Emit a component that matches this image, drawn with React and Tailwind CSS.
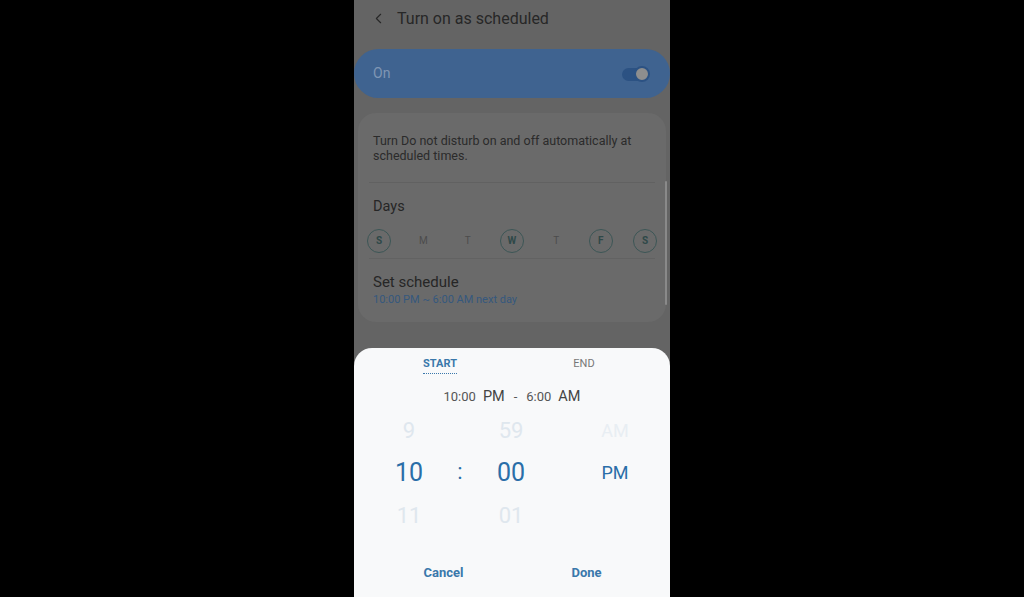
import { ChevronLeft } from "lucide-react";

const days = [
  { d: "S", on: true },
  { d: "M", on: false },
  { d: "T", on: false },
  { d: "W", on: true },
  { d: "T", on: false },
  { d: "F", on: true },
  { d: "S", on: true },
];

function Wheel({ top, mid, bottom, w = "w-[60px]" }) {
  return (
    <div className={`flex flex-col items-center ${w}`}>
      <div className="h-[42.5px] flex items-center text-[22px] text-[#dfe7ee]">{top}</div>
      <div className="h-[42.5px] flex items-center text-[25px] text-[#2a6ea8]">{mid}</div>
      <div className="h-[42.5px] flex items-center text-[22px] text-[#dfe7ee]">{bottom}</div>
    </div>
  );
}

export default function App() {
  return (
    <div className="w-[1024px] h-[597px] bg-black overflow-hidden" style={{ fontFamily: "Roboto, 'Noto Sans', sans-serif" }}>
      <div className="relative mx-auto w-[316px] h-[597px] bg-[#646464] overflow-hidden">
        {/* Header */}
        <div className="h-[37px] flex items-center pl-[16px] text-[#272727]">
          <ChevronLeft size={17} strokeWidth={1.6} />
          <span className="ml-[10px] text-[16px]">Turn on as scheduled</span>
        </div>

        {/* On pill */}
        <div className="mt-[12px] h-[49px] rounded-full bg-[#3f6390] flex items-center justify-between pl-[19px] pr-[20px]">
          <span className="text-[14px] text-[#7f96b4]">On</span>
          <div className="relative w-[28px] h-[14px]">
            <div className="absolute left-0 top-[1px] w-[26px] h-[13px] rounded-full bg-[#2c5283]" />
            <div className="absolute right-0 -top-[1px] w-[16px] h-[16px] rounded-full bg-[#8e8e8e] border-2 border-[#2c5283]" />
          </div>
        </div>

        {/* Card */}
        <div className="mx-[4px] mt-[15px] rounded-[18px] bg-[#6a6a6a] pb-[2px]">
          <div className="px-[15px] pt-[20px] pb-[19px] text-[12.5px] leading-[15px] text-[#2b2b2b]">
            Turn Do not disturb on and off automatically at scheduled times.
          </div>
          <div className="mx-[11px] h-px bg-[#616161]" />
          <div className="px-[15px] pt-[13px] text-[14.5px] text-[#262626]">Days</div>
          <div className="flex justify-between px-[9px] mt-[11px]">
            {days.map((x, i) => (
            <div
              key={i}
              className={`w-[24px] h-[24px] rounded-full flex items-center justify-center text-[10px] ${x.on ? "border border-[#3c5656] text-[#2f4848] font-bold" : "text-[#4c4c4c]"}`}
            >
              {x.d}
            </div>
            ))}
          </div>
          <div className="mx-[11px] mt-[5px] h-px bg-[#626262]" />
          <div className="px-[15px] pt-[14px] text-[15px] leading-[18px] text-[#262626]">Set schedule</div>
          <div className="px-[15px] pt-[1px] pb-[12px] text-[11px] text-[#35587e]">10:00 PM ~ 6:00 AM next day</div>
        </div>

        {/* scrollbar */}
        <div className="absolute right-[3px] top-[181px] w-[2px] h-[124px] rounded-full bg-[#8a8a8a]" />

        {/* Bottom sheet */}
        <div className="absolute left-0 right-0 bottom-0 h-[249px] rounded-t-[18px] bg-[#f8f9fa] flex flex-col">
          <div className="flex mt-[6px] h-[18px] items-center text-[11px]">
            <div className="flex-1 flex justify-center pl-[14px]">
              <span className="font-bold text-[#3a78ab] border-b border-dotted border-[#3a78ab] pb-[1px] mt-[4px]">START</span>
            </div>
            <div className="flex-1 flex justify-center pr-[14px] text-[#777] mt-[3px]">END</div>
          </div>
          <div className="flex justify-center items-baseline mt-[14px] text-[#444]">
            <span className="text-[13px] text-[#555]">10:00</span>
            <span className="ml-[7px] text-[14.5px]">PM</span>
            <span className="mx-[9px] text-[13px] text-[#555]">-</span>
            <span className="text-[13px] text-[#555]">6:00</span>
            <span className="ml-[7px] text-[14.5px]">AM</span>
          </div>
          <div className="flex items-center mt-[1px] pl-[25px]">
            <Wheel top="9" mid="10" bottom="11" />
            <div className="w-[42px] text-center text-[22px] text-[#2a6ea8] -mt-[3px]">:</div>
            <Wheel top="59" mid="00" bottom="01" />
            <div className="w-[44px]" />
            <div className="flex flex-col items-center w-[60px]">
              <div className="h-[42.5px] flex items-center text-[18px] text-[#e8eef3]">AM</div>
              <div className="h-[42.5px] flex items-center text-[18px] text-[#2a6ea8]">PM</div>
              <div className="h-[42.5px]" />
            </div>
          </div>
          <div className="flex mt-[27px] text-[13px] font-bold text-[#3a78ab]">
            <div className="flex-1 flex justify-center pl-[18px]">Cancel</div>
            <div className="flex-1 flex justify-center pr-[12px]">Done</div>
          </div>
        </div>
      </div>
    </div>
  );
}
